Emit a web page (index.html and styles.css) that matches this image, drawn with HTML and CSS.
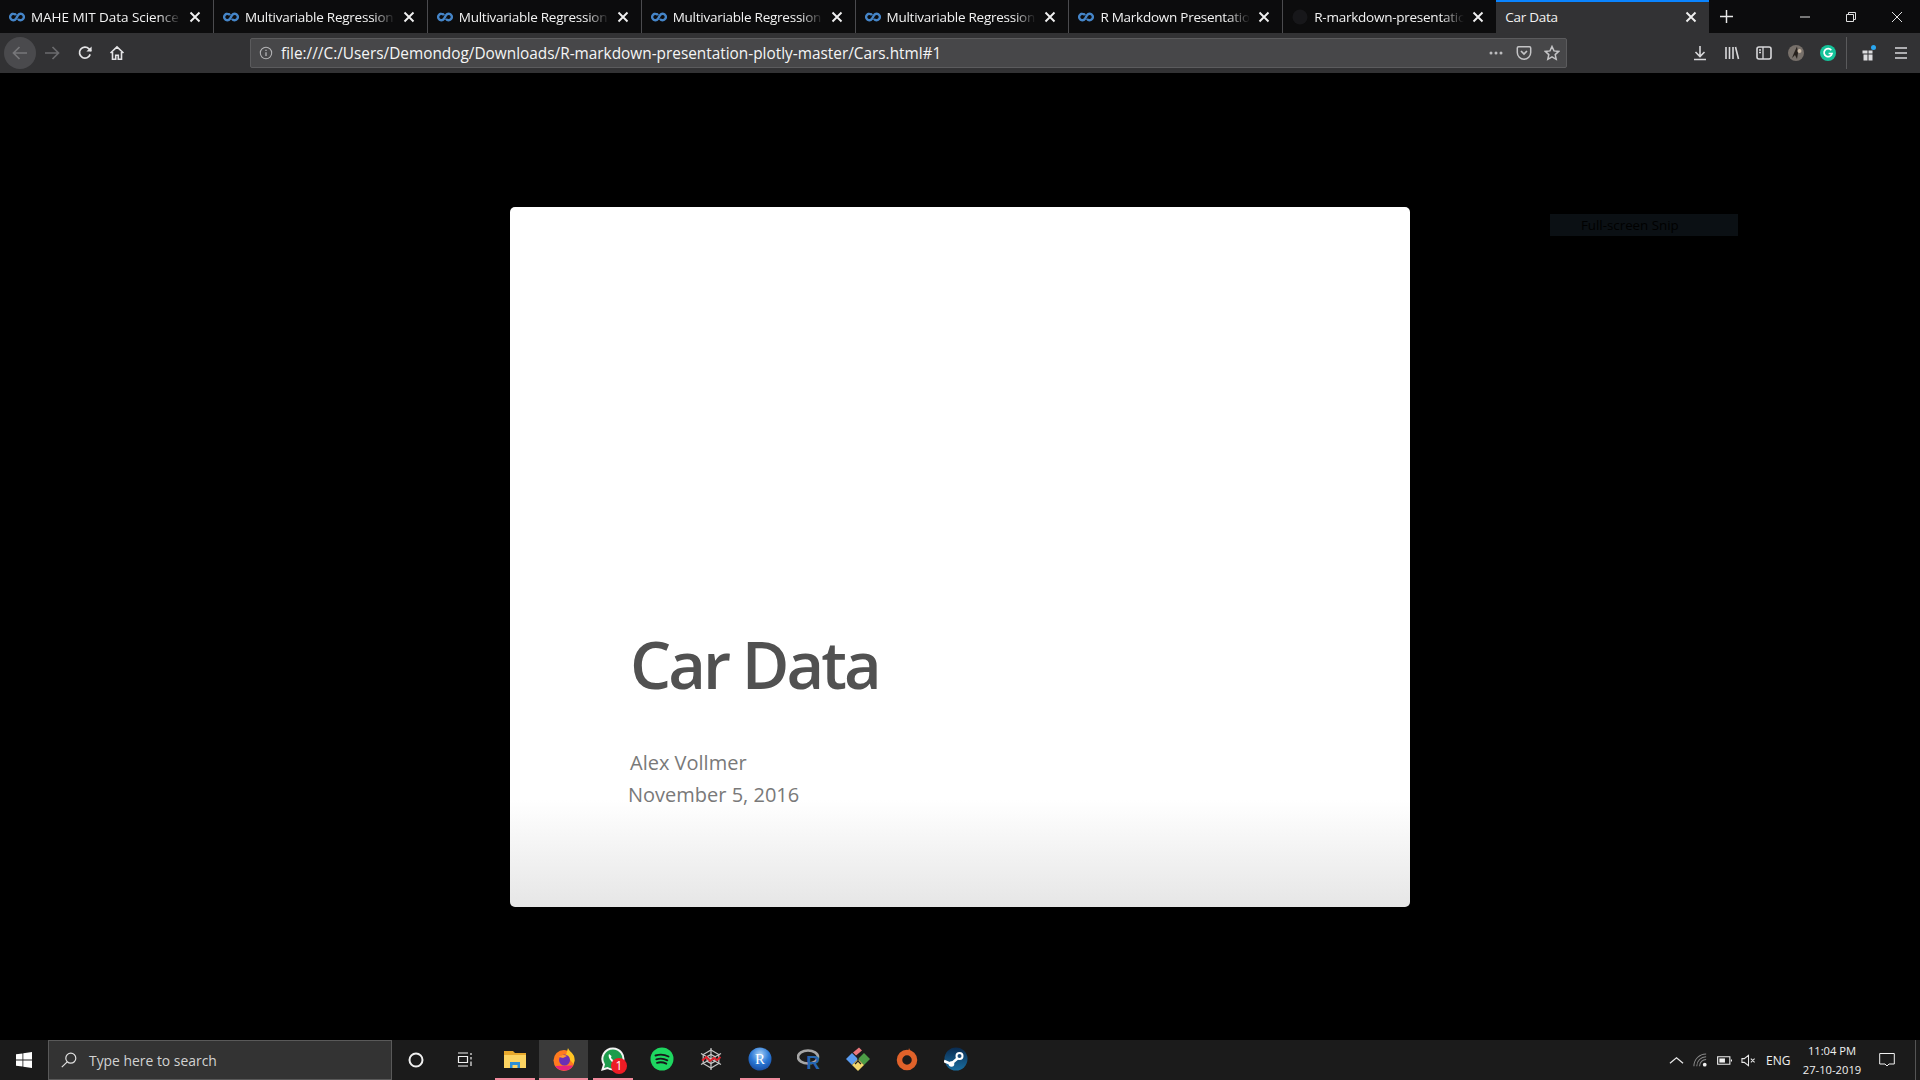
FILE: index.html
```html
<!DOCTYPE html>
<html lang="en">
<head>
  <meta charset="UTF-8">
  <meta name="viewport" content="width=device-width, initial-scale=1.0">
  <title>Car Data</title>
  <link rel="stylesheet" href="styles.css">
</head>
<body>
  <svg class="defs" width="0" height="0">
    <symbol id="fav" viewBox="0 0 16 16">
      <path d="M4.4 4.8a3.2 3.2 0 1 0 2.6 5M9 6.200a3.200 3.200 0 1 1 2.600 5M7 9.800L9 6.200M4.400 4.800c1.100 0 2 .5 2.600 1.400M11.600 11.200c-1.100 0-2-.5-2.600-1.400" fill="none" stroke="#4585c8" stroke-width="2.400"/>
    </symbol>
    <symbol id="close" viewBox="0 0 12 12">
      <path d="M1.500 1.500l9 9M10.500 1.500l-9 9" stroke="#f0f0f0" stroke-width="1.900" fill="none"/>
    </symbol>
  </svg>

  <header class="tabbar">
    <div class="tabs">
      <div class="tab tab-first"><svg class="fav"><use href="#fav"/></svg><span class="tab-title">MAHE MIT Data Science</span><svg class="tab-x"><use href="#close"/></svg></div>
      <div class="tab"><svg class="fav"><use href="#fav"/></svg><span class="tab-title">Multivariable Regression</span><svg class="tab-x"><use href="#close"/></svg></div>
      <div class="tab"><svg class="fav"><use href="#fav"/></svg><span class="tab-title">Multivariable Regression</span><svg class="tab-x"><use href="#close"/></svg></div>
      <div class="tab"><svg class="fav"><use href="#fav"/></svg><span class="tab-title">Multivariable Regression</span><svg class="tab-x"><use href="#close"/></svg></div>
      <div class="tab"><svg class="fav"><use href="#fav"/></svg><span class="tab-title">Multivariable Regression</span><svg class="tab-x"><use href="#close"/></svg></div>
      <div class="tab"><svg class="fav"><use href="#fav"/></svg><span class="tab-title">R Markdown Presentation</span><svg class="tab-x"><use href="#close"/></svg></div>
      <div class="tab tab-plain">
        <svg class="fav" viewBox="0 0 16 16"><circle cx="8" cy="8" r="7.5" fill="#17171a"/></svg>
        <span class="tab-title">R-markdown-presentation</span><svg class="tab-x"><use href="#close"/></svg>
      </div>
      <div class="tab tab-active"><span class="tab-title">Car Data</span><svg class="tab-x"><use href="#close"/></svg></div>
    </div>
    <svg class="newtab" viewBox="0 0 16 16"><path d="M8 0v16M0 8h16" stroke="#e8e8e8" stroke-width="1.800"/></svg>
    <div class="winbtns">
      <svg class="winbtn" viewBox="0 0 12 12"><path d="M1 6h10" stroke="#e0e0e0"/></svg>
      <svg class="winbtn" viewBox="0 0 12 12"><path d="M1.500 3.500h7v7h-7zM3.500 3.500v-2h7v7h-2" stroke="#e0e0e0" fill="none"/></svg>
      <svg class="winbtn" viewBox="0 0 12 12"><path d="M1 1l10 10M11 1L1 11" stroke="#e0e0e0" fill="none"/></svg>
    </div>
  </header>

  <nav class="toolbar">
    <div class="nav-btns">
      <div class="nav-btn nav-back">
        <svg class="ico" viewBox="0 0 16 16"><path d="M15 8H1.500M7.500 2L1.500 8l6 6" stroke="#77777a" stroke-width="1.700" fill="none"/></svg>
      </div>
      <div class="nav-btn">
        <svg class="ico" viewBox="0 0 16 16"><path d="M1 8h13.500M8.500 2l6 6-6 6" stroke="#6b6b6e" stroke-width="1.700" fill="none"/></svg>
      </div>
      <div class="nav-btn">
        <svg class="ico" viewBox="0 0 16 16"><path d="M13.200 9.400A5.500 5.500 0 1 1 12 3.800L14 6" stroke="#e4e4e6" stroke-width="1.700" fill="none"/><path d="M14.600 1.400v5.200H9.400z" fill="#e4e4e6"/></svg>
      </div>
      <div class="nav-btn">
        <svg class="ico" viewBox="0 0 16 16"><path d="M1.500 8L8 1.800 14.500 8M3.500 7v7.200h3.200v-4h2.600v4h3.200V7" stroke="#e4e4e6" stroke-width="1.600" fill="none"/></svg>
      </div>
    </div>
    <div class="urlbar">
      <svg class="url-info" viewBox="0 0 16 16"><circle cx="8" cy="8" r="6.500" stroke="#b4b4b6" fill="none" stroke-width="1.200"/><path d="M8 7v4.500M8 4.300v1.400" stroke="#b4b4b6" stroke-width="1.500"/></svg>
      <span class="url-text">file:///C:/Users/Demondog/Downloads/R-markdown-presentation-plotly-master/Cars.html#1</span>
      <svg class="url-ico" viewBox="0 0 16 16"><circle cx="3" cy="8" r="1.500" fill="#bcbcbe"/><circle cx="8" cy="8" r="1.500" fill="#bcbcbe"/><circle cx="13" cy="8" r="1.500" fill="#bcbcbe"/></svg>
      <svg class="url-ico" viewBox="0 0 16 16"><path d="M2.500 1.800h11c.7 0 1.200.5 1.200 1.200v4.500a6.700 6.700 0 0 1-13.400 0V3c0-.7.5-1.200 1.200-1.200z" stroke="#c4c4c6" stroke-width="1.500" fill="none"/><path d="M5 6l3 3 3-3" stroke="#c4c4c6" stroke-width="1.700" fill="none"/></svg>
      <svg class="url-ico" viewBox="0 0 16 16"><path d="M8 1.500l2 4.400 4.700.5-3.500 3.200 1 4.700L8 11.900l-4.200 2.400 1-4.700L1.300 6.400 6 5.900z" stroke="#c4c4c6" stroke-width="1.500" fill="none"/></svg>
    </div>
    <div class="tools">
      <svg class="tool" viewBox="0 0 16 16"><path d="M8 1v10M3.500 7L8 11.500 12.500 7M2 14.500h12" stroke="#d8d8da" stroke-width="1.600" fill="none"/></svg>
      <svg class="tool" viewBox="0 0 16 16"><path d="M2 2v12M5.500 2v12M9 2v12M11.500 2l3 12" stroke="#d8d8da" stroke-width="1.600" fill="none"/></svg>
      <svg class="tool" viewBox="0 0 16 16"><rect x="1" y="2" width="14" height="12" rx="2" stroke="#d8d8da" stroke-width="1.600" fill="none"/><path d="M7 2v12M3 5h2M3 7.500h2" stroke="#d8d8da" stroke-width="1.300"/></svg>
      <svg class="tool" viewBox="0 0 16 16"><circle cx="8" cy="8" r="8" fill="#77706a"/><path d="M9 1.500L6 8l-2 5 3-3 2 4 1-6z" fill="#26201c"/><circle cx="11.500" cy="6" r="2" fill="#c9b8a5"/></svg>
      <svg class="tool" viewBox="0 0 16 16"><circle cx="8" cy="8" r="8" fill="#15c39a"/><path d="M11.300 5.300A4 4 0 1 0 12 8.500H8.600" stroke="#fff" stroke-width="1.700" fill="none"/></svg>
      <span class="tool-sep"></span>
      <svg class="tool" viewBox="0 0 16 16"><circle cx="12.500" cy="2.500" r="2.500" fill="#2aa7f0"/><path d="M1.500 5.500h5v3h-5zM7.500 5.500h4v3h-4zM2.500 9.500h4v6h-4zM7.500 9.500h4v6h-4z" fill="#dcdcde"/></svg>
      <svg class="tool" viewBox="0 0 16 16"><path d="M2 3h12M2 8h12M2 13h12" stroke="#d8d8da" stroke-width="1.700"/></svg>
    </div>
  </nav>

  <main class="stage">
    <section class="slide">
      <h1 class="slide-title">Car Data</h1>
      <p class="slide-author">Alex Vollmer</p>
      <p class="slide-date">November 5, 2016</p>
    </section>
    <div class="snip"><span>Full-screen Snip</span></div>
  </main>

  <footer class="taskbar">
    <div class="start">
      <svg class="start-logo" viewBox="0 0 16 16"><path d="M0 2.300l6.500-.9v6.200H0zM7.300 1.300L16 0v7.600H7.300zM0 8.400h6.500v6.200L0 13.700zM7.300 8.400H16V16l-8.700-1.200z" fill="#fff"/></svg>
    </div>
    <div class="search">
      <svg class="search-ico" viewBox="0 0 16 16"><circle cx="9.800" cy="6.200" r="5" stroke="#e0e0e0" stroke-width="1.200" fill="none"/><path d="M6.200 9.800L.8 15.200" stroke="#e0e0e0" stroke-width="1.200"/></svg>
      <span>Type here to search</span>
    </div>
    <div class="task-sys">
      <svg class="sys-ico" viewBox="0 0 16 16"><circle cx="8" cy="8" r="6.500" stroke="#f0f0f0" stroke-width="2" fill="none"/></svg>
      <svg class="sys-ico" viewBox="0 0 16 16"><path d="M1 1h10M1 14h10M1.500 4.500h9v6h-9zM14 1v2M14 5v2.500M14 9.500V14" stroke="#f0f0f0" stroke-width="1.200" fill="none"/></svg>
    </div>
    <div class="task-apps">
      <div class="app app-open">
        <svg class="app-ico" viewBox="0 0 24 24"><path d="M1 4h9l2 2h11v15H1z" fill="#e8a92c"/><path d="M1 8h22v13H1z" fill="#fcd462"/><path d="M7 15h10v6h-2.500v-3h-5v3H7z" fill="#2b8fd6"/></svg>
      </div>
      <div class="app app-open app-current">
        <svg class="app-ico" viewBox="0 0 24 24"><circle cx="12" cy="13.500" r="10.500" fill="#ff7a1f"/><path d="M16 1c1 3 4 4 6 8 1 3 .5 6-.5 8L14 8z" fill="#ffc423"/><path d="M3 19c3 4 8 5.500 13 4 2-.8 4-2.500 5-4.500z" fill="#e8247d"/><circle cx="12.500" cy="13" r="5.500" fill="#6b2fb5"/><path d="M7 10c2-2.500 6-2.500 8-1l-4 2z" fill="#ff9a2e"/></svg>
      </div>
      <div class="app app-open">
        <svg class="app-ico" viewBox="0 0 24 24"><path d="M12 1.500A10.500 10.500 0 0 0 3 17.500L1.500 22.500l5-1.500A10.500 10.500 0 1 0 12 1.500z" fill="#1c9c4c" stroke="#f4f4f4" stroke-width="2"/><path d="M8 7c-1 2 0 5 2.500 7.500s4.500 3 6 2l-1-2.500-2 .5-3.500-3.500.5-2z" fill="#fff"/></svg>
        <span class="app-badge">1</span>
      </div>
      <div class="app">
        <svg class="app-ico" viewBox="0 0 24 24"><circle cx="12" cy="12" r="11.500" fill="#1ed760"/><path d="M5.500 8.500c4-1.200 9-1 13 1M6.300 12.300c3.500-1 7.500-.8 11 1M7 15.800c3-.8 6.300-.6 9.300.9" stroke="#16181a" stroke-width="1.900" fill="none" stroke-linecap="round"/></svg>
      </div>
      <div class="app">
        <svg class="app-ico" viewBox="0 0 24 24"><path d="M12 1v22M2 6.500l20 11M22 6.500l-20 11" stroke="#c8c8c8" stroke-width="1.200" fill="none"/><path d="M12 3l7.800 4.500v9L12 21l-7.800-4.500v-9zM12 7.500l3.900 2.200v4.600L12 16.500l-3.900-2.200V9.700z" stroke="#c8c8c8" stroke-width="1.200" fill="none"/><path d="M3 13.500l4.500-3.500 3.500 4 4-3 3 2 3.500-3" stroke="#e0202a" stroke-width="2" fill="none"/></svg>
      </div>
      <div class="app app-open">
        <svg class="app-ico" viewBox="0 0 24 24"><defs><radialGradient id="rBall" cx="0.5" cy="0.3" r="0.8"><stop offset="0" stop-color="#a9d2f7"/><stop offset="0.5" stop-color="#2a78d6"/><stop offset="1" stop-color="#123f90"/></radialGradient></defs><circle cx="12" cy="12" r="11.500" fill="url(#rBall)"/><text class="logo-r" x="12" y="17" text-anchor="middle">R</text></svg>
      </div>
      <div class="app">
        <svg class="app-ico" viewBox="0 0 24 24"><ellipse cx="11" cy="10" rx="10" ry="6.500" fill="none" stroke="#a6a6a6" stroke-width="2.600"/><text class="logo-rstudio" x="16" y="22" text-anchor="middle">R</text></svg>
      </div>
      <div class="app">
        <svg class="app-ico" viewBox="0 0 24 24"><path d="M0 12l6-6 6 6-6 6z" fill="#5a9cf0"/><path d="M12 12l6-6 6 6-6 6z" fill="#4d9c46"/><path d="M6 18l6-6 6 6-6 6z" fill="#f2d76c"/><path d="M7 5.500L13 .5l3 3-6 5z" fill="#e9777c"/><path d="M12 8v6M12 14l-3 3M12 14l3 3" stroke="#222" stroke-width="1.300" fill="none"/></svg>
      </div>
      <div class="app">
        <svg class="app-ico" viewBox="0 0 24 24"><circle cx="12" cy="13" r="7.500" fill="none" stroke="#e0622a" stroke-width="5.500"/><path d="M14 1l-1 4 3 .5zM10 23l1-4-3-.5z" fill="#e0622a"/></svg>
      </div>
      <div class="app">
        <svg class="app-ico" viewBox="0 0 24 24"><defs><linearGradient id="steamBg" x1="0" y1="0" x2="0" y2="1"><stop offset="0" stop-color="#0a2b50"/><stop offset="1" stop-color="#1a6ea0"/></linearGradient></defs><circle cx="12" cy="12" r="11.500" fill="url(#steamBg)"/><path d="M0 14l7 3 7-6" stroke="#fff" stroke-width="2.600" fill="none"/><circle cx="15.500" cy="9" r="4" fill="#fff"/><circle cx="15.500" cy="9" r="2" fill="#1a4c78"/><circle cx="7.500" cy="17" r="2.800" fill="#fff"/></svg>
      </div>
    </div>
    <div class="tray">
      <svg class="tray-ico" viewBox="0 0 16 16"><path d="M1 11l7-6 7 6" stroke="#e8e8e8" stroke-width="1.300" fill="none"/></svg>
      <svg class="tray-ico" viewBox="0 0 16 16"><path d="M1 14a13 13 0 0 1 13-13M4 14A10 10 0 0 1 14 4M7 14a7 7 0 0 1 7-7" stroke="#8a8a8a" stroke-width="1.100" fill="none"/><circle cx="12.500" cy="12.500" r="2" fill="#f0f0f0"/></svg>
      <svg class="tray-ico" viewBox="0 0 16 16"><path d="M.7 4h13v8H.7zM15.500 7v2" stroke="#f0f0f0" stroke-width="1.200" fill="none"/><path d="M2.500 5.800h6v4.400h-6z" fill="#f0f0f0"/></svg>
      <svg class="tray-ico" viewBox="0 0 16 16"><path d="M1 6h2.500L8 2.500v11L3.500 10H1zM10.500 6l4 4M14.500 6l-4 4" stroke="#e8e8e8" stroke-width="1.100" fill="none"/></svg>
      <span class="tray-lang">ENG</span>
      <div class="clock"><span>11:04 PM</span><span>27-10-2019</span></div>
      <svg class="tray-note" viewBox="0 0 16 16"><path d="M.7 1.500h14.600v10.500H10L8 14l-2-2H.7z" stroke="#f0f0f0" stroke-width="1" fill="none"/></svg>
      <span class="show-desktop"></span>
    </div>
  </footer>
</body>
</html>
```
FILE: styles.css
```css
* {
  box-sizing: border-box;
}
html, body {
  margin: 0;
  height: 100%;
}
body {
  width: 1920px;
  height: 1080px;
  overflow: hidden;
  display: flex;
  flex-direction: column;
  background: #000;
  font-family: "Open Sans", "Noto Sans", sans-serif;
}
.defs {
  position: absolute;
}

/* tabs */
.tabbar {
  height: 33px;
  flex: none;
  display: flex;
  background: #0c0c0d;
  color: #f2f2f2;
}
.tabs {
  width: 1709px;
  flex: none;
  display: flex;
}
.tab {
  flex: 1;
  min-width: 0;
  display: flex;
  align-items: center;
  padding: 0 12px 0 9px;
  border-right: 1px solid #4b4b4e;
  font-size: 13.5px;
  letter-spacing: -0.25px;
}
.tab-first {
  letter-spacing: -0.05px;
}
.tab-plain {
  border-right: 0;
}
.tab-active {
  background: #323234;
  border-top: 2px solid #0a84ff;
  border-right: 0;
  padding-bottom: 2px;
}
.fav {
  width: 16px;
  height: 16px;
  margin-right: 6px;
  flex: none;
}
.tab-title {
  flex: 1;
  min-width: 0;
  white-space: nowrap;
  overflow: hidden;
  -webkit-mask-image: linear-gradient(to right, #000 85%, transparent 100%);
  mask-image: linear-gradient(to right, #000 85%, transparent 100%);
}
.tab-active .tab-title {
  -webkit-mask-image: none;
  mask-image: none;
}
.tab-x {
  width: 12px;
  height: 12px;
  margin-left: 8px;
  flex: none;
}
.newtab {
  width: 13px;
  height: 13px;
  margin: 10px 0 0 11px;
  flex: none;
}
.winbtns {
  margin-left: auto;
  display: flex;
  gap: 34px;
  padding: 11px 17px 0 0;
}
.winbtn {
  width: 12px;
  height: 12px;
}

/* toolbar */
.toolbar {
  height: 40px;
  flex: none;
  display: flex;
  align-items: center;
  background: #323234;
}
.nav-btns {
  width: 250px;
  flex: none;
  display: flex;
  align-items: center;
  padding-left: 4px;
}
.nav-btn {
  width: 32.5px;
  height: 32px;
  display: flex;
  align-items: center;
  justify-content: center;
  border-radius: 50%;
}
.nav-back {
  width: 32px;
  background: #4a4a4d;
}
.ico {
  width: 16px;
  height: 16px;
}
.urlbar {
  width: 1317px;
  height: 30px;
  flex: none;
  display: flex;
  align-items: center;
  padding: 0 6px 0 8px;
  gap: 12px;
  background: #474749;
  border: 1px solid #5b5b5d;
  border-radius: 2px;
  color: #f5f5f5;
  font-size: 15.37px;
}
.url-info {
  width: 14px;
  height: 14px;
  margin-right: -4px;
}
.url-text {
  flex: 1;
  white-space: nowrap;
}
.url-ico {
  width: 16px;
  height: 16px;
}
.tools {
  flex: 1;
  display: flex;
  align-items: center;
  padding-left: 125px;
  gap: 16px;
}
.tool {
  width: 16px;
  height: 16px;
  flex: none;
}
.tool-sep {
  width: 1px;
  height: 32px;
  margin: 0 -2px 0 -6px;
  background: #5a5a5c;
}

/* page */
.stage {
  flex: 1;
  position: relative;
  display: flex;
  align-items: center;
  justify-content: center;
}
.slide {
  width: 900px;
  height: 700px;
  display: flex;
  flex-direction: column;
  justify-content: flex-end;
  padding: 0 0 96px 120px;
  background: linear-gradient(to bottom, #fff 593px, #e6e6e6 100%);
  border-radius: 5px;
}
.slide-title {
  margin: 0 0 37px;
  font-size: 65px;
  font-weight: 600;
  line-height: 91px;
  letter-spacing: -3px;
  color: #515151;
}
.slide-author,
.slide-date {
  margin: 0;
  font-size: 20px;
  line-height: 32px;
  color: #797979;
}
.slide-date {
  margin-left: -2px;
}
.snip {
  position: absolute;
  left: 1550px;
  top: 141px;
  width: 188px;
  height: 22px;
  padding-left: 31px;
  background: #0b1014;
  color: #000;
  font-size: 13.3px;
  line-height: 22px;
}

/* taskbar */
.taskbar {
  height: 40px;
  flex: none;
  display: flex;
  background: #1b1b1b;
  color: #f0f0f0;
}
.start {
  width: 48px;
  flex: none;
  display: flex;
  align-items: center;
  justify-content: center;
}
.start-logo {
  width: 16px;
  height: 16px;
}
.search {
  width: 344px;
  flex: none;
  display: flex;
  align-items: center;
  padding-left: 12px;
  gap: 12px;
  background: #333;
  border: 1px solid #595959;
  color: #d2d2d2;
  font-size: 13.9px;
}
.search-ico {
  width: 16px;
  height: 16px;
}
.task-sys {
  width: 97px;
  flex: none;
  display: flex;
  align-items: center;
  justify-content: space-around;
}
.sys-ico {
  width: 16px;
  height: 16px;
}
.task-apps {
  display: flex;
  flex: none;
  margin-left: 1px;
}
.app {
  position: relative;
  width: 49px;
  display: flex;
  align-items: center;
  justify-content: center;
  padding-bottom: 2px;
}
.app-open::after {
  content: "";
  position: absolute;
  left: 5px;
  right: 4px;
  bottom: 0;
  height: 2px;
  background: #f08a9c;
}
.app-current {
  background: #3a3a3a;
}
.app-current::after {
  left: 0;
  right: 0;
}
.app-ico {
  width: 24px;
  height: 24px;
}
.logo-r {
  font-family: "Liberation Serif", serif;
  font-size: 15px;
  fill: #fff;
}
.logo-rstudio {
  font-family: "Liberation Sans", sans-serif;
  font-size: 19px;
  font-weight: 700;
  fill: #2566b0;
}
.app-badge {
  position: absolute;
  left: 23px;
  top: 18px;
  width: 16px;
  height: 16px;
  border-radius: 50%;
  background: #ee1c25;
  color: #fff;
  font-size: 12px;
  line-height: 16px;
  text-align: center;
}
.tray {
  margin-left: auto;
  display: flex;
  align-items: center;
  padding-right: 4px;
  font-size: 12px;
}
.tray-ico {
  width: 15px;
  height: 15px;
  margin-left: 9px;
  flex: none;
}
.tray-lang {
  margin-left: 10px;
  width: 24px;
}
.clock {
  width: 72px;
  margin-left: 6px;
  display: flex;
  flex-direction: column;
  align-items: center;
  font-size: 11.2px;
  line-height: 19px;
}
.tray-note {
  width: 16px;
  height: 16px;
  margin-left: 11px;
}
.show-desktop {
  width: 1px;
  height: 40px;
  margin-left: 20px;
  background: #555;
}
```
